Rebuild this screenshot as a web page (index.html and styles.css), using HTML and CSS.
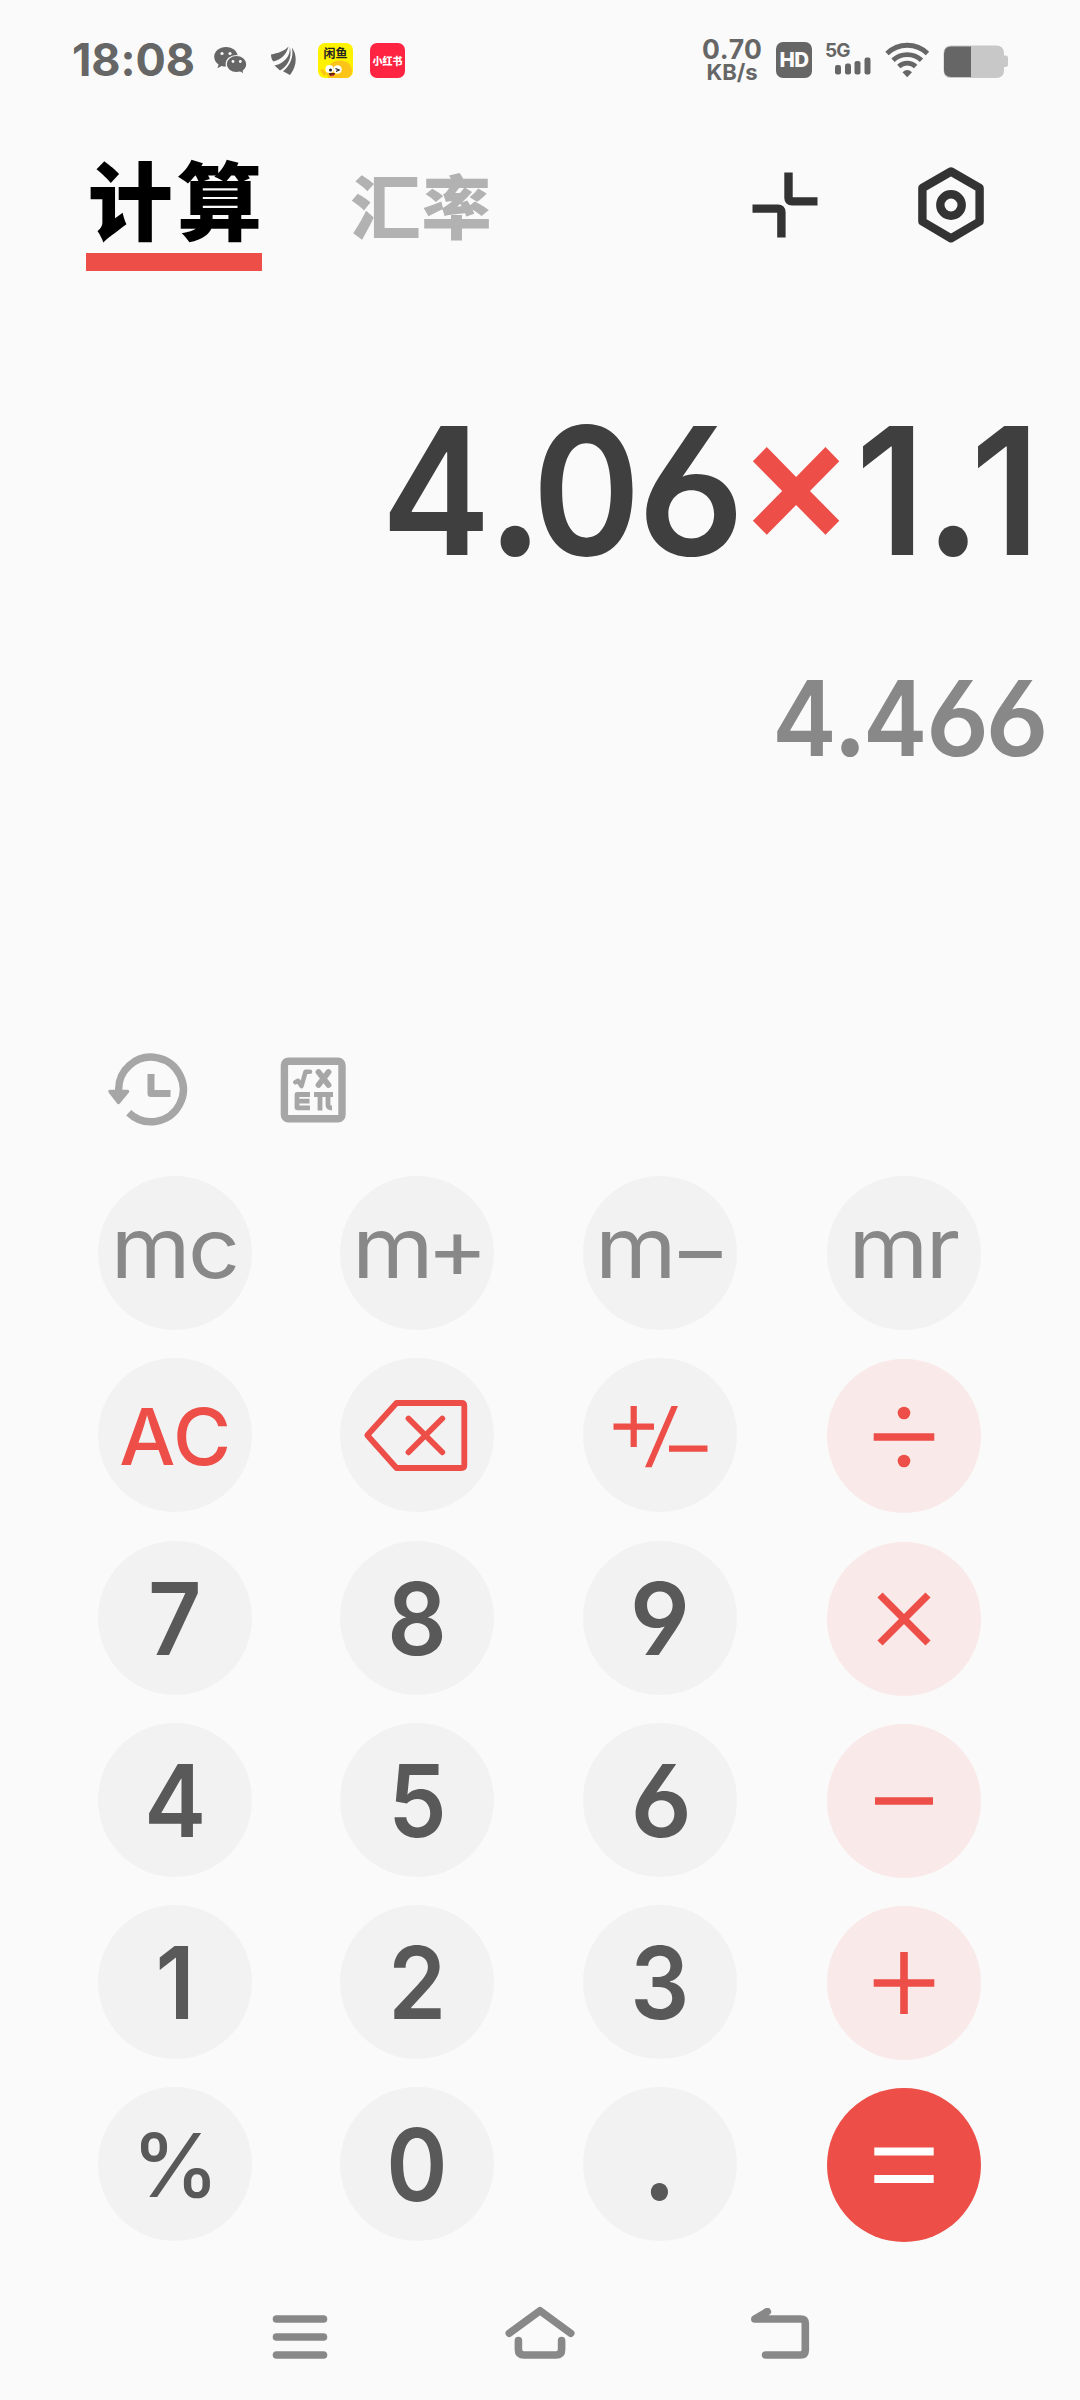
FILE: index.html
```html
<!DOCTYPE html>
<html lang="zh">
<head>
<meta charset="utf-8">
<title>计算</title>
<link rel="stylesheet" href="styles.css">
</head>
<body>
<div class="status">
  <span class="clock">18:08</span>
  <svg class="wechat" width="36" height="32" viewBox="213 45 36 32">
    <path fill="#666" d="M226 47c-6.600 0-11.800 4.300-11.800 9.800 0 3.200 1.700 6 4.400 7.800l-1.200 3.600 4.300-2.200c1.300.4 2.800.6 4.300.6 6.600 0 11.800-4.300 11.800-9.800S232.600 47 226 47z"/>
    <circle cx="222" cy="53.500" r="1.600" fill="#fafafa"/><circle cx="230" cy="53.500" r="1.600" fill="#fafafa"/>
    <path fill="#666" stroke="#fafafa" stroke-width="1.200" d="M236.500 55.500c-5.800 0-10.300 3.800-10.300 8.600s4.500 8.600 10.300 8.600c1.300 0 2.500-.2 3.600-.5l4 2.100-.9-3.400c2.300-1.600 3.600-4 3.600-6.800 0-4.800-4.500-8.600-10.300-8.600z"/>
    <circle cx="233" cy="61.500" r="1.400" fill="#fafafa"/><circle cx="240.300" cy="61.500" r="1.400" fill="#fafafa"/>
  </svg>
  <svg class="feather" width="28" height="32" viewBox="269 45 28 32">
    <path fill="#666" d="M271 54.500C278 53 284 51.500 288.500 46.500C286.500 54 282 59.500 273.500 61.500C271.500 59.500 271 57 271 54.500zM289.600 46.500C291 54 286 63 274.500 65.500L280 70.500C288.500 66 292.500 56 289.600 46.500zM291.800 47.500C294 57 290 65.500 283 71.200L290 75C297 66 297.500 55 291.800 47.500z"/>
  </svg>
  <div class="app app-fish"><span>闲鱼</span>
    <svg width="35" height="35" viewBox="0 0 35 35">
      <path fill="#fcc419" d="M10 35C7 27 10 20 18 18C25 16 34 19 34 28C34 31 33 33 31 35z"/>
      <path fill="#fcc419" d="M2 27l3-1 4 5-3 2z"/>
      <circle cx="11.500" cy="26" r="4" fill="#fff"/><circle cx="19.500" cy="26.500" r="4.300" fill="#fff"/>
      <circle cx="12.500" cy="27" r="1.500" fill="#222"/><path d="M17.500 25.500l3.500 1.500-3 1.500" stroke="#222" stroke-width="1.300" fill="none"/>
      <path fill="#5a1c10" d="M11 30h6c0 4-6 4.500-6 0z"/><path fill="#e8413a" d="M12.500 32.200q2-1.500 3.500 0q-1.500 1.500-3.500 0z"/>
    </svg>
  </div>
  <div class="app app-red"><span>小红书</span></div>
  <div class="speed"><span class="rate">0.70</span><span class="unit">KB/s</span></div>
  <div class="hd"><span>HD</span></div>
  <div class="cell">
    <span>5G</span>
    <svg width="37" height="18" viewBox="834 57 37 18" fill="#666">
      <rect x="835" y="65" width="6" height="9.500" rx="2.200"/><rect x="845" y="63.500" width="6" height="11" rx="2.200"/><rect x="854.500" y="61" width="6" height="13.500" rx="2.200"/><rect x="864.500" y="57.500" width="6" height="17" rx="2.200"/>
    </svg>
  </div>
  <svg class="wifi" width="46" height="36" viewBox="884 42 46 36" fill="none" stroke="#666" stroke-width="4.800">
    <path d="M887 53.500A29 29 0 0 1 927.500 53.500M893 60.300A20.500 20.500 0 0 1 921.500 60.300M898.800 66.500A12.300 12.300 0 0 1 915.700 66.500"/>
    <path fill="#666" stroke="none" d="M902.500 72.300Q907.200 67.500 912 72.300L907.200 77.300z"/>
  </svg>
  <svg class="battery" width="66" height="34" viewBox="943 45 66 34">
    <path fill="#c8c8c8" d="M951 45.500h45q8 0 8 8v2h1.500q2.500 0 2.500 2.500v6.500q0 2.500-2.500 2.500H1004v3q0 8-8 8h-45q-7.500 0-7.500-8V53.500q0-8 7.500-8z"/>
    <path fill="#666" d="M971 46.500V77h-20q-7-.5-7-7V53.500q.5-7 7-7z"/>
  </svg>
</div>

<div class="header">
  <div class="tab active">计算</div>
  <div class="tab">汇率</div>
  <svg class="collapse" width="66" height="66" viewBox="752 172 66 66" fill="none" stroke="#333" stroke-width="8.400" stroke-linejoin="round">
    <path d="M788.500 172.500V198Q788.500 201.400 792 201.400H817.500M752.500 208.600H778Q781.400 208.600 781.400 212V237.500"/>
  </svg>
  <svg class="settings" width="68" height="78" viewBox="917 166 68 78" fill="none" stroke="#333" stroke-width="8.400" stroke-linejoin="round">
    <path d="M951 171.500L979.600 188V221.500L951 238.300L922.400 221.500V188z"/><circle cx="951" cy="205" r="10.700"/>
  </svg>
</div>

<div class="display">
  <div class="expression"><span class="first">4</span><span class="point">.</span><span class="zero">0</span><span class="six">6</span><span class="times">×</span><span class="one">1</span><span class="point">.</span>1</div>
  <div class="result"><span class="first">4</span><span class="point">.</span><span class="four">4</span><span class="six">6</span><span class="six last">6</span></div>
</div>

<div class="tools">
  <svg width="82" height="76" viewBox="106 1052 82 76">
    <path d="M118.800 1092A32.300 32.300 0 1 1 128.700 1112.800" fill="none" stroke="#a6a6a6" stroke-width="7.400"/>
    <path d="M110 1091.500H127.500L118.500 1102.500z" fill="#a6a6a6" stroke="#a6a6a6" stroke-width="3.500" stroke-linejoin="round"/>
    <path d="M151 1077.500V1093.600H167" fill="none" stroke="#a6a6a6" stroke-width="7" stroke-linecap="square" stroke-linejoin="round"/>
  </svg>
  <svg class="formula" width="66" height="66" viewBox="280 1057 66 66" fill="none" stroke="#a6a6a6">
    <rect x="284.400" y="1061.300" width="57.600" height="57.400" rx="4" stroke-width="7.400"/>
    <path d="M295.300 1082.200L298 1080.800L301.500 1086L305.500 1071.800H310" stroke-width="4.600" stroke-linecap="round" stroke-linejoin="round"/>
    <path d="M318.500 1072L328.500 1085M328.500 1072L318.500 1085" stroke-width="5.800" stroke-linecap="round"/>
    <path d="M310 1094.500H297V1107.800H310M297 1101.200H309.500" stroke-width="4.800" stroke-linejoin="round"/>
    <path d="M314 1094.500H333M320 1094.500V1110.500M328 1094.500V1105Q328 1108 332 1108" stroke-width="4.800"/>
  </svg>
</div>

<div class="keypad">
  <div class="key mem"><span>mc</span></div>
  <div class="key mem sign"><span>m+</span></div>
  <div class="key mem sign"><span>m−</span></div>
  <div class="key mem"><span>mr</span></div>

  <div class="key ac"><span>AC</span></div>
  <div class="key"><svg class="ico" viewBox="0 0 154 154" stroke-width="5.800" stroke-linejoin="round"><path d="M27.300 77.300L56.500 45H121.500Q124.300 45 124.300 48V107Q124.300 110 121.500 110H56.500z"/><path stroke-linecap="round" d="M68.500 60.500L102.300 94.300M102.300 60.500L68.500 94.300"/></svg></div>
  <div class="key"><svg class="ico" viewBox="0 0 154 154" stroke-width="6.200"><path d="M30.500 68.700H71M50.700 48V89M86 90.700H124.500"/><path class="dot" d="M62 109.300H68.600L95 48H88.500z"/></svg></div>
  <div class="key op"><svg class="ico" viewBox="0 0 154 154"><path stroke-width="7.600" d="M46.700 78H107.300"/><circle class="dot" cx="77" cy="54" r="6.300"/><circle class="dot" cx="77" cy="102" r="6.300"/></svg></div>

  <div class="key"><span>7</span></div>
  <div class="key"><span>8</span></div>
  <div class="key"><span class="wide">9</span></div>
  <div class="key op"><svg class="ico" viewBox="0 0 154 154"><path stroke-width="7.200" d="M53 53L101 101M101 53L53 101"/></svg></div>

  <div class="key"><span>4</span></div>
  <div class="key"><span>5</span></div>
  <div class="key"><span class="wide shift">6</span></div>
  <div class="key op"><svg class="ico" viewBox="0 0 154 154"><path stroke-width="7.600" d="M48 77H106"/></svg></div>

  <div class="key"><span>1</span></div>
  <div class="key"><span>2</span></div>
  <div class="key"><span>3</span></div>
  <div class="key op"><svg class="ico" viewBox="0 0 154 154"><path stroke-width="7.600" d="M46.700 77H107.300M77 46V108"/></svg></div>

  <div class="key pct"><span>%</span></div>
  <div class="key"><span>0</span></div>
  <div class="key"><span class="period">.</span></div>
  <div class="key eq"><svg class="ico" viewBox="0 0 154 154"><path stroke-width="8" d="M47.300 63.500H106.700M47.300 91H106.700"/></svg></div>
</div>

<div class="nav">
  <svg class="menu" width="56" height="46" viewBox="272 2314 56 46"><path d="M276.500 2319H323.500M276.500 2337H323.500M276.500 2355H323.500"/></svg>
  <svg class="home" width="72" height="62" viewBox="504 2302 72 62"><path d="M509.300 2333.300L540 2310.700L570.700 2333.300M518.400 2340.600V2349.500Q518.400 2355 524 2355H556Q561.600 2355 561.600 2349.500V2340.600"/></svg>
  <svg class="back" width="60" height="60" viewBox="750 2308 60 60"><path d="M765.500 2355H800.500Q805.300 2355 805.300 2350V2323.500Q805.300 2319 800.500 2319H754.800L767.300 2311.600"/><path fill="#888" stroke="none" d="M754.800 2319L767.300 2311.600L768 2319z"/></svg>
</div>
</body>
</html>
```
FILE: styles.css
```css
* { box-sizing: border-box; }
body {
  margin: 0;
  width: 1080px;
  height: 2400px;
  background: #fafafa;
  font-family: Inter, "Noto Sans CJK SC", sans-serif;
  font-feature-settings: "cv03", "cv04";
  font-kerning: none;
  overflow: hidden;
  display: flex;
  flex-direction: column;
}
svg { display: block; flex: none; }

.status {
  height: 120px;
  padding: 0 71px 0 72px;
  display: flex;
  align-items: flex-start;
  color: #666;
  flex: none;
}
.clock {
  width: 123px;
  margin-top: 32.500px;
  font-size: 45px;
  line-height: 54px;
  font-weight: 700;
  white-space: nowrap;
  letter-spacing: -0.100px;
}
.wechat { margin: 45px 0 0 18px; }
.feather { margin: 45px 0 0 20px; }
.app {
  position: relative;
  width: 35px;
  height: 35px;
  margin-top: 43px;
  border-radius: 7px;
  overflow: hidden;
  font-family: "Noto Sans CJK SC", sans-serif;
  text-align: center;
  white-space: nowrap;
  flex: none;
}
.app-fish { margin-left: 21px; background: #fff200; color: #222; font-size: 12px; font-weight: 700; line-height: 20px; }
.app-fish svg { position: absolute; left: 0; top: 0; }
.app-red { margin-left: 17px; background: #ff2442; color: #fff; font-size: 10px; font-weight: 900; line-height: 35px; display: flex; justify-content: center; }
.speed {
  margin: 37px 0 0 296px;
  width: 62px;
  display: flex;
  flex-direction: column;
  align-items: center;
  font-weight: 700;
  white-space: nowrap;
}
.rate { font-size: 26.500px; line-height: 25px; }
.unit { font-size: 22px; line-height: 20px; }
.hd {
  margin: 42px 0 0 13px;
  width: 36px;
  height: 36px;
  border-radius: 7px;
  background: #666;
  color: #fafafa;
  display: flex;
  justify-content: center;
  font-size: 20.500px;
  line-height: 36px;
  font-weight: 800;
  letter-spacing: -0.500px;
}
.cell {
  margin: 41px 0 0 13px;
  width: 46px;
  display: flex;
  flex-direction: column;
  align-items: flex-end;
}
.cell span { align-self: flex-start; font-size: 19px; line-height: 20px; font-weight: 700; letter-spacing: -1px; }
.cell svg { margin-top: -4px; }
.wifi { margin: 42px 0 0 13px; }
.battery { margin: 45px 0 0 13px; }

.header {
  height: 180px;
  padding-left: 86px;
  display: flex;
  align-items: baseline;
  flex: none;
}
.tab {
  margin-left: 88.500px;
  padding-top: 32px;
  font-family: "Noto Sans CJK SC", sans-serif;
  font-weight: 900;
  font-size: 70px;
  line-height: 90px;
  letter-spacing: 1px;
  color: #b2b2b2;
  white-space: nowrap;
}
.tab.active {
  margin-left: 0;
  width: 176px;
  padding-left: 1.700px;
  padding-bottom: 11px;
  border-bottom: 18px solid #ed4e48;
  font-size: 85px;
  letter-spacing: 4.400px;
  color: #000;
}
.collapse { align-self: flex-start; margin: 52px 0 0 259.500px; }
.settings { align-self: flex-start; margin: 46px 0 0 99px; }

.display { height: 740px; padding-top: 91px; flex: none; text-align: right; white-space: nowrap; font-weight: 600; }
.expression {
  padding-right: 39px;
  font-size: 177px;
  line-height: 200px;
  color: #3f3f3f;
  transform: translateX(-1px) scaleX(0.93);
  transform-origin: 1041px 0;
}
.expression .first { letter-spacing: -6px; }
.expression .zero { letter-spacing: -4px; }
.expression .one { letter-spacing: -1.800px; }
.expression .six { margin-right: 4px; }
.expression .point { font-size: 200px; line-height: 0; letter-spacing: -13.400px; }
.six { display: inline-block; transform: scaleX(1.085); transform-origin: 0 0; }
.times { display: inline-block; transform: translateY(-13px) scaleX(1.06); margin-right: 5px; color: #ed4e48; }
.result {
  margin-top: 67px;
  padding-right: 36.500px;
  font-size: 104px;
  line-height: 120px;
  color: #888;
  transform: scaleX(0.93);
  transform-origin: 1046px 0;
}
.result .first { letter-spacing: -4.700px; }
.result .point { font-size: 120px; line-height: 0; letter-spacing: -5.200px; }
.result .four { letter-spacing: -1.700px; }
.result .six { margin-right: 1.200px; }
.result .last { margin-right: 0; }

.tools { height: 136px; padding: 12px 0 0 106px; display: flex; flex: none; }
.formula { margin: 5px 0 0 92px; }

.keypad {
  margin: 0 0 0 98px;
  height: 1094px;
  flex: none;
  display: grid;
  grid-template-columns: 242px 243px 244px 154px;
  grid-auto-rows: 182.300px;
}
.key {
  width: 154px;
  height: 154px;
  border-radius: 50%;
  background: #f2f2f2;
  display: flex;
  align-items: center;
  justify-content: center;
  font-size: 100px;
  line-height: 120px;
  font-weight: 600;
  color: #595959;
  white-space: nowrap;
}
.key span { transform: translateY(0.500px) scaleX(0.93); }
.key .wide { transform: translateY(0.500px) scaleX(1); }
.key .shift { transform: translate(1px, 0.500px) scaleX(1.020); }
.key .period { font-size: 115px; transform: translate(-1px, -5.500px) scaleX(0.95); }
.key.mem { font-size: 84px; font-weight: 400; color: #888; letter-spacing: -2.500px; }
.key.mem span { transform: translate(-1.200px, -5.500px) scaleX(1.085); }
.key.mem.sign { letter-spacing: -6.500px; }
.key.mem.sign span { transform: translate(-0.500px, -5.500px) scaleX(1.11); }
.key.ac { font-size: 78.500px; font-weight: 500; color: #ed4e48; letter-spacing: -2.500px; }
.key.ac span { transform: translate(-1.200px, 2px) scaleX(1.010); }
.key.pct { font-size: 88px; font-weight: 500; }
.key.pct span { transform: translate(0.500px, 0.500px); }
.key.op { background: #f9e9e8; margin-top: 1px; }
.key.eq { background: #ed4e48; margin-top: 1px; }
.ico { width: 154px; height: 154px; fill: none; stroke: #ed4e48; }
.ico .dot { fill: #ed4e48; stroke: none; }
.eq .ico { stroke: #fff; }

.nav { flex: 1; display: flex; padding-left: 272px; align-items: flex-start; }
.nav svg { fill: none; stroke: #888; stroke-width: 7.600px; stroke-linecap: round; stroke-linejoin: round; }
.nav .menu { margin-top: 44px; }
.nav .home { margin: 32px 0 0 176px; }
.nav .back { margin: 38px 0 0 174px; }
```
